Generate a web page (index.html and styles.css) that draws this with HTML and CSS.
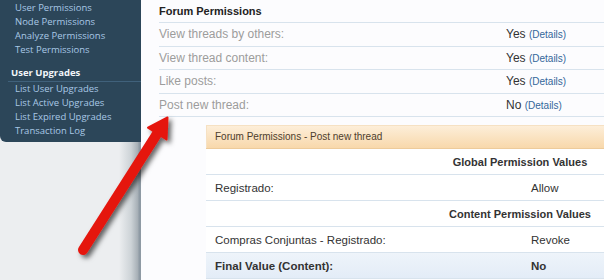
FILE: index.html
```html
<!DOCTYPE html>
<html lang="en">
<head>
<meta charset="utf-8">
<title>Forum Permissions</title>
<link rel="stylesheet" href="styles.css">
</head>
<body>
<div class="page">
  <aside class="side">
    <nav class="nav">
      <ul class="links">
        <li><a href="#">User Permissions</a></li>
        <li><a href="#">Node Permissions</a></li>
        <li><a href="#">Analyze Permissions</a></li>
        <li><a href="#">Test Permissions</a></li>
      </ul>
      <h3 class="nav-head">User Upgrades</h3>
      <ul class="links">
        <li><a href="#">List User Upgrades</a></li>
        <li><a href="#">List Active Upgrades</a></li>
        <li><a href="#">List Expired Upgrades</a></li>
        <li><a href="#">Transaction Log</a></li>
      </ul>
    </nav>
  </aside>
  <main class="content">
    <h2 class="perm-title">Forum Permissions</h2>
    <dl class="perm-list">
      <div class="perm-row"><dt>View threads by others:</dt><dd>Yes <a href="#">(Details)</a></dd></div>
      <div class="perm-row"><dt>View thread content:</dt><dd>Yes <a href="#">(Details)</a></dd></div>
      <div class="perm-row"><dt>Like posts:</dt><dd>Yes <a href="#">(Details)</a></dd></div>
      <div class="perm-row"><dt>Post new thread:</dt><dd>No <a href="#">(Details)</a></dd></div>
    </dl>
    <section class="overlay">
      <header class="overlay-head">Forum Permissions - Post new thread</header>
      <div class="ov-row ov-section"><span></span><span class="ov-title">Global Permission Values</span></div>
      <div class="ov-row"><span class="ov-label">Registrado:</span><span class="ov-value">Allow</span></div>
      <div class="ov-row ov-section"><span></span><span class="ov-title">Content Permission Values</span></div>
      <div class="ov-row"><span class="ov-label">Compras Conjuntas - Registrado:</span><span class="ov-value">Revoke</span></div>
      <div class="ov-row ov-final"><span class="ov-label">Final Value (Content):</span><span class="ov-value">No</span></div>
    </section>
  </main>
  <svg class="arrow" width="604" height="280" viewBox="0 0 604 280" aria-hidden="true">
    <defs>
      <filter id="shadow" x="-20%" y="-20%" width="140%" height="140%">
        <feDropShadow dx="3" dy="3" stdDeviation="2.5" flood-color="#000" flood-opacity="0.6"/>
      </filter>
    </defs>
    <g filter="url(#shadow)">
      <line x1="83" y1="250" x2="157.4" y2="133.2" stroke="#e5140d" stroke-width="10" stroke-linecap="round"/>
      <polygon points="167.5,117.5 166.5,139.5 148,127.7" fill="#e5140d" stroke="#e5140d" stroke-width="2" stroke-linejoin="round"/>
    </g>
  </svg>
</div>
</body>
</html>
```

FILE: styles.css
```css
html, body {
  margin: 0;
  padding: 0;
}

body {
  width: 604px;
  height: 280px;
  overflow: hidden;
  background: #fcfcfe;
  font-family: "Liberation Sans", Arial, sans-serif;
}

.page {
  position: relative;
  display: grid;
  grid-template-columns: 141px 1fr;
  height: 280px;
}

/* ---------- sidebar ---------- */
.side {
  background: linear-gradient(to right, #eceef0 0, #eceef0 119px, #cdd3d7 131px, #a5aeb5 138px, #8e9aa4 139px, #8e9aa4 141px);
}

.nav {
  background: #2c4659;
  height: 142px;
  box-sizing: border-box;
  padding-top: 1px;
  border-bottom-left-radius: 6px;
  font-family: "Open Sans", "Noto Sans", sans-serif;
  font-size: 9.5px;
}

.links {
  list-style: none;
  margin: 0;
  padding: 0 0 0 15px;
}

.links li {
  line-height: 14px;
  height: 14px;
  white-space: nowrap;
}

.links a {
  color: #a9c8e6;
  text-decoration: none;
}

.nav-head {
  margin: 9px 0 0 8px;
  padding: 0 0 1px 3px;
  line-height: 14px;
  font-size: 9.5px;
  font-weight: 700;
  color: #f2f6fa;
  border-bottom: 1px solid #40617b;
}

/* ---------- content ---------- */
.content {
  background: #fcfcfe;
  padding-left: 18px;
  min-width: 0;
}

.perm-title {
  margin: 0;
  height: 22px;
  line-height: 23px;
  font-size: 11px;
  font-weight: 700;
  color: #222;
  border-bottom: 1px solid #d8e3ed;
}

.perm-list {
  margin: 0;
}

.perm-row {
  display: flex;
  align-items: center;
  height: 22.5px;
  border-bottom: 1px solid #d8e3ed;
  font-size: 12px;
}

.perm-row dt {
  flex: 1;
  color: #9c9c9c;
}

.perm-row dd {
  margin: 0;
  width: 98px;
  color: #333;
}

.perm-row dd a {
  font-size: 10px;
  color: #33679a;
  text-decoration: none;
}

/* ---------- overlay ---------- */
.overlay {
  margin: 8px 0 0 47px;
  background: #fff;
}

.overlay-head {
  height: 23px;
  line-height: 24px;
  padding-left: 9px;
  font-size: 10px;
  color: #4e3e2e;
  background: linear-gradient(#fdefdb, #f8d8ab);
  border-bottom: 1px solid #edcb9b;
  box-shadow: inset 1px 1px 0 #f6e1c3;
}

.ov-row {
  display: grid;
  grid-template-columns: 1fr 168px;
  align-items: center;
  height: 25px;
  border-bottom: 1px solid #d8e3ed;
  font-size: 11.5px;
  color: #333;
}

.ov-label {
  padding-left: 9px;
  white-space: nowrap;
}

.ov-title {
  text-align: center;
  font-weight: 700;
  font-size: 11px;
  white-space: nowrap;
}

.ov-value {
  padding-left: 95px;
}

.ov-final {
  background: linear-gradient(#eef4fa, #e3ecf7);
  font-weight: 700;
}

/* ---------- annotation arrow ---------- */
.arrow {
  position: absolute;
  left: 0;
  top: 0;
  pointer-events: none;
}
```
